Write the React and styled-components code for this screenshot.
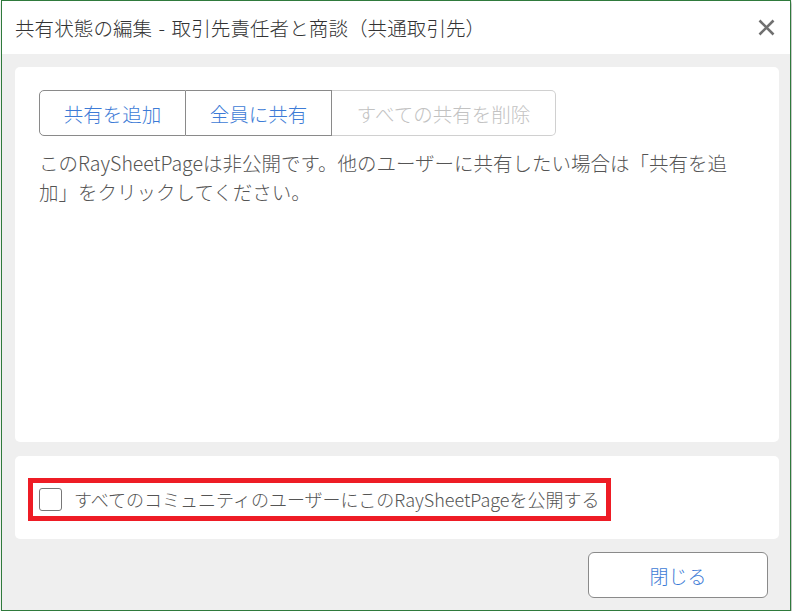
import React from 'react';
import styled, { createGlobalStyle } from 'styled-components';

const GlobalStyle = createGlobalStyle`
  html, body {
    margin: 0;
    padding: 0;
    background: #ffffff;
  }
  body {
    font-family: "Noto Sans CJK JP", "Liberation Sans", sans-serif;
    font-weight: 300;
  }
`;

const StyledDialog = styled.div`
  box-sizing: border-box;
  width: 790px;
  height: 611px;
  margin-left: 1px;
  border: 1px solid #2f7a3c;
  display: flex;
  flex-direction: column;
  background-color: #efefef;
  box-shadow: 1px 2px 3px rgba(0, 0, 0, 0.35);
`;

const StyledTitleBar = styled.div`
  height: 53px;
  flex-shrink: 0;
  display: flex;
  align-items: center;
  justify-content: space-between;
  padding: 0 14px 0 13px;
  background-color: white;
`;

const StyledTitle = styled.span`
  font-size: 19.5px;
  color: #333;
  letter-spacing: 0.1px;
  word-spacing: 2px;
`;

const StyledCloseX = styled.button`
  border: none;
  background: none;
  padding: 0;
  width: 20px;
  height: 20px;
  display: flex;
  align-items: center;
  justify-content: center;
  :hover {
    cursor: pointer;
  }
`;

const StyledBody = styled.div`
  flex: 1;
  display: flex;
  flex-direction: column;
  padding: 13px 11px 12px 13px;
`;

const StyledPanel = styled.div`
  background-color: white;
  border-radius: 5px;
  padding: ${(p) => p.padding};
  flex: ${(p) => (p.grow ? 1 : 'none')};
  margin-bottom: ${(p) => p.after}px;
`;

const StyledButtonGroup = styled.div`
  display: inline-flex;
`;

const StyledGroupButton = styled.button`
  height: 46px;
  width: ${(p) => p.width}px;
  font-family: inherit;
  font-weight: 300;
  font-size: 19.5px;
  background: white;
  color: ${(p) => (p.disabled ? '#c2c2c2' : '#3d7bd6')};
  border: 1px solid ${(p) => (p.disabled ? '#d0d0d0' : '#8a8a8a')};
  border-left-width: ${(p) => (p.first ? '1px' : '0')};
  border-radius: ${(p) => {
    if (p.first) return '5px 0 0 5px';
    if (p.last) return '0 5px 5px 0';
    return '0';
  }};
  padding: 0;
  :hover {
    cursor: pointer;
  }
`;

const StyledMessage = styled.p`
  margin: 12px 0 0;
  font-size: 19.5px;
  line-height: 29px;
  color: #555;
  letter-spacing: 0;
`;

const StyledHighlight = styled.label`
  display: inline-flex;
  align-items: center;
  gap: 12px;
  border: 5px solid #ee1c25;
  padding: 5px 6px;
`;

const StyledCheckbox = styled.span`
  box-sizing: border-box;
  width: 23px;
  height: 23px;
  border: 1px solid #777;
  border-radius: 3px;
  background: white;
`;

const StyledCheckText = styled.span`
  font-size: 18px;
  color: #555;
  letter-spacing: 0;
  line-height: 23px;
`;

const StyledFooter = styled.div`
  display: flex;
  justify-content: flex-end;
  padding-right: 11px;
`;

const StyledCloseButton = styled.button`
  width: 180px;
  height: 46px;
  background: white;
  border: 1px solid #8a8a8a;
  border-radius: 6px;
  font-family: inherit;
  font-weight: 300;
  font-size: 19px;
  color: #3d7bd6;
  :hover {
    cursor: pointer;
  }
`;

const App = () => (
  <>
    <GlobalStyle />
    <StyledDialog>
      <StyledTitleBar>
        <StyledTitle>共有状態の編集 - 取引先責任者と商談（共通取引先）</StyledTitle>
        <StyledCloseX aria-label="閉じる">
          <svg width="17" height="17" viewBox="0 0 17 17">
            <path d="M1.5 1.5 L15.5 15.5 M15.5 1.5 L1.5 15.5" stroke="#707070" strokeWidth="2.6" strokeLinecap="butt" />
          </svg>
        </StyledCloseX>
      </StyledTitleBar>
      <StyledBody>
        <StyledPanel grow after={14} padding="23px 24px">
          <StyledButtonGroup>
            <StyledGroupButton first width={147}>共有を追加</StyledGroupButton>
            <StyledGroupButton width={146}>全員に共有</StyledGroupButton>
            <StyledGroupButton last disabled width={224}>すべての共有を削除</StyledGroupButton>
          </StyledButtonGroup>
          <StyledMessage>
            このRaySheetPageは非公開です。他のユーザーに共有したい場合は「共有を追加」をクリックしてください。
          </StyledMessage>
        </StyledPanel>
        <StyledPanel after={13} padding="22px 13px 18px">
          <StyledHighlight>
            <StyledCheckbox />
            <StyledCheckText>すべてのコミュニティのユーザーにこのRaySheetPageを公開する</StyledCheckText>
          </StyledHighlight>
        </StyledPanel>
        <StyledFooter>
          <StyledCloseButton>閉じる</StyledCloseButton>
        </StyledFooter>
      </StyledBody>
    </StyledDialog>
  </>
);

export default App;
